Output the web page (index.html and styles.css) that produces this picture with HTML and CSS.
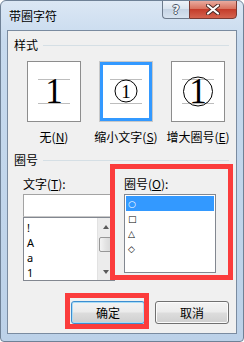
FILE: index.html
```html
<!DOCTYPE html>
<html lang="zh-CN">
<head>
    <meta charset="UTF-8">
    <title>带圈字符</title>
    <link rel="stylesheet" href="styles.css">
</head>
<body>
    <div class="window">
        <div class="titlebar">
            <span class="title">带圈字符</span>
            <div class="caption-btns">
                <div class="cap-btn help">?</div>
                <div class="cap-btn close">
                    <svg width="14" height="11" viewBox="0 0 14 11">
                        <path d="M2 1.5 L12 9.5 M12 1.5 L2 9.5" stroke="#4a2a26" stroke-width="4" stroke-linecap="round"/>
                        <path d="M2 1.5 L12 9.5 M12 1.5 L2 9.5" stroke="#ffffff" stroke-width="2.2" stroke-linecap="round"/>
                    </svg>
                </div>
            </div>
        </div>

        <div class="client">
            <!-- 样式 -->
            <div class="group-head"><span>样式</span><i class="rule"></i></div>
            <div class="styles">
                <div class="opt">
                    <div class="preview">
                        <svg width="52" height="59" viewBox="0 0 52 59">
                            <line x1="10" y1="17.5" x2="42" y2="17.5" class="guide"/>
                            <line x1="10" y1="41.5" x2="42" y2="41.5" class="guide"/>
                            <text x="26" y="41" class="digit big">1</text>
                        </svg>
                    </div>
                    <div class="cap">无(<u>N</u>)</div>
                </div>
                <div class="opt">
                    <div class="preview selected">
                        <svg width="52" height="59" viewBox="0 0 52 59">
                            <line x1="10" y1="17.5" x2="42" y2="17.5" class="guide"/>
                            <line x1="10" y1="41.5" x2="42" y2="41.5" class="guide"/>
                            <circle cx="26" cy="29" r="11" class="ring"/>
                            <text x="26" y="36" class="digit small">1</text>
                        </svg>
                    </div>
                    <div class="cap">缩小文字(<u>S</u>)</div>
                </div>
                <div class="opt">
                    <div class="preview">
                        <svg width="52" height="59" viewBox="0 0 52 59">
                            <line x1="10" y1="17.5" x2="42" y2="17.5" class="guide"/>
                            <line x1="10" y1="41.5" x2="42" y2="41.5" class="guide"/>
                            <circle cx="26" cy="29.5" r="14.5" class="ring"/>
                            <text x="26" y="41" class="digit big">1</text>
                        </svg>
                    </div>
                    <div class="cap">增大圈号(<u>E</u>)</div>
                </div>
            </div>

            <!-- 圈号 -->
            <div class="group-head second"><span>圈号</span><i class="rule"></i></div>
            <div class="enclose">
                <div class="col">
                    <div class="field-label">文字(<u>T</u>):</div>
                    <div class="edit"></div>
                    <div class="listbox chars">
                        <div class="items">
                            <div class="item">!</div>
                            <div class="item">A</div>
                            <div class="item">a</div>
                            <div class="item">1</div>
                        </div>
                        <div class="scrollbar">
                            <div class="sb-btn"><i class="arrow up"></i></div>
                            <div class="thumb"></div>
                            <div class="sb-track"></div>
                            <div class="sb-btn"><i class="arrow down"></i></div>
                        </div>
                    </div>
                </div>
                <div class="col">
                    <div class="field-label">圈号(<u>O</u>):</div>
                    <div class="listbox shapes">
                        <div class="item active">○</div>
                        <div class="item">□</div>
                        <div class="item">△</div>
                        <div class="item">◇</div>
                    </div>
                </div>
            </div>

            <div class="buttons">
                <button class="btn default">确定</button>
                <button class="btn">取消</button>
            </div>

            <!-- red annotation marks -->
            <div class="mark mark-shapes"></div>
            <div class="mark mark-ok"></div>
        </div>
    </div>
</body>
</html>
```

FILE: styles.css
```css
/* Win7 style dialog */
* {
    box-sizing: border-box;
}
body {
    margin: 0;
    font-family: "Noto Sans CJK SC", "Noto Sans", sans-serif;
    font-size: 12px;
    color: #000;
}
u {
    text-decoration: underline;
    text-underline-offset: 1px;
}

.window {
    width: 244px;
    height: 342px;
    border: 1px solid #6f8196;
    border-radius: 6px 6px 4px 4px;
    background: linear-gradient(#dbe7f4, #c7daee 40px, #bcd1e8);
    overflow: hidden;
}
.titlebar {
    height: 29px;
    display: flex;
    justify-content: space-between;
    align-items: flex-start;
    padding-right: 6px;
}
.title {
    padding: 7px 0 0 8px;
    line-height: 16px;
    font-size: 12px;
}
.caption-btns {
    display: flex;
    margin-top: -1px;
}
.cap-btn {
    height: 19px;
    display: flex;
    align-items: center;
    justify-content: center;
    border: 1px solid #6d7b8c;
}
.help {
    width: 27px;
    border-right: none;
    border-radius: 0 0 0 4px;
    background: linear-gradient(#eef3f9, #dae4ef 45%, #c6d4e4 50%, #d7e3f0);
    font-family: "DejaVu Sans", sans-serif;
    font-weight: bold;
    font-size: 12px;
    color: #f6f8fb;
    text-shadow: 1px 0 0 #4d5868, -1px 0 0 #4d5868, 0 1px 0 #4d5868, 0 -1px 0 #4d5868;
}
.close {
    width: 48px;
    border-color: #7a3a33;
    border-radius: 0 0 4px 0;
    background: linear-gradient(#e9ab9f, #d9735f 45%, #c53d2b 50%, #d4634f);
}

.client {
    position: relative;
    margin: 0 6px;
    height: 304px;
    border: 1px solid #7a8ba0;
    background: #f0f0f0;
    padding: 6px 7px 0 6px;
}

.group-head {
    display: flex;
    align-items: center;
    line-height: 16px;
    height: 16px;
}
.group-head.second {
    margin-top: 7px;
}
.rule {
    flex: 1;
    height: 1px;
    margin-left: 5px;
    background: #d5dfe5;
}

.styles {
    display: flex;
    gap: 18px;
    margin: 8px 0 0 13px;
}
.opt {
    width: 54px;
    display: flex;
    flex-direction: column;
    align-items: center;
}
.preview {
    width: 54px;
    height: 61px;
    border: 1px solid #8d8d8d;
    background: #fff;
}
.preview svg {
    display: block;
}
.preview.selected {
    border-color: #c8c8c8;
    box-shadow: inset 0 0 0 3px #3399ff;
}
.guide {
    stroke: #bdbdbd;
    stroke-width: 1;
}
.ring {
    fill: none;
    stroke: #000;
    stroke-width: 1;
}
.digit {
    font-family: "Liberation Serif", serif;
    text-anchor: middle;
    fill: #000;
}
.digit.big {
    font-size: 35px;
}
.digit.small {
    font-size: 19px;
}
.cap {
    margin-top: 7px;
    line-height: 16px;
    white-space: nowrap;
}

.enclose {
    display: flex;
    gap: 9px;
    margin: 8px 0 0 9px;
}
.col {
    width: 92px;
}
.field-label {
    line-height: 16px;
    white-space: nowrap;
}
.edit {
    margin-top: 2px;
    height: 23px;
    background: #fff;
    border: 1px solid #a3a3a3;
    border-bottom-color: #c9c9c9;
}
.listbox {
    background: #fff;
    border: 1px solid #828790;
}
.chars {
    height: 64px;
    display: flex;
}
.chars .items {
    flex: 1;
    padding: 2px 0 0 3px;
    font-family: "Noto Sans", sans-serif;
    font-size: 11px;
}
.chars .item {
    height: 15px;
    line-height: 15px;
}
.scrollbar {
    width: 17px;
    display: flex;
    flex-direction: column;
    background: #ececec;
    border-left: 1px solid #e2e2e2;
}
.sb-btn {
    height: 17px;
    display: flex;
    align-items: center;
    justify-content: center;
}
.sb-track {
    flex: 1;
}
.thumb {
    margin: 2px 1px 0;
    height: 15px;
    border: 1px solid #979797;
    border-radius: 2px;
    background: linear-gradient(90deg, #f3f3f3, #e2e2e2 50%, #d6d6d6);
}
.arrow {
    width: 0;
    height: 0;
    border-left: 3.5px solid transparent;
    border-right: 3.5px solid transparent;
}
.arrow.up {
    border-bottom: 4px solid #5a5a5a;
}
.arrow.down {
    border-top: 4px solid #5a5a5a;
}

.shapes {
    margin-top: 2px;
    height: 79px;
    padding: 1px;
}
.shapes .item {
    height: 15px;
    line-height: 12px;
    display: flex;
    align-items: center;
    padding-left: 2px;
    font-family: "DejaVu Sans", sans-serif;
    font-size: 9px;
}
.shapes .item.active {
    background: #3399ff;
    color: #fff;
}

.buttons {
    display: flex;
    justify-content: flex-end;
    gap: 10px;
    margin-top: 20px;
}
.btn {
    width: 74px;
    height: 23px;
    padding: 0;
    font-family: inherit;
    font-size: 12px;
    color: #000;
    border: 1px solid #707070;
    border-radius: 3px;
    background: linear-gradient(#f3f3f3, #ebebeb 48%, #dddddd 52%, #cfcfcf);
    box-shadow: inset 0 0 0 1px #fbfbfb;
}
.btn.default {
    border-color: #3c8ed1;
    box-shadow: inset 0 0 0 1px #a9dcf6;
}

.mark {
    position: absolute;
    border: 5px solid #fb3c3c;
}
.mark-shapes {
    left: 102px;
    top: 133px;
    width: 123px;
    height: 116px;
}
.mark-ok {
    left: 57px;
    top: 262px;
    width: 84px;
    height: 36px;
}
```
